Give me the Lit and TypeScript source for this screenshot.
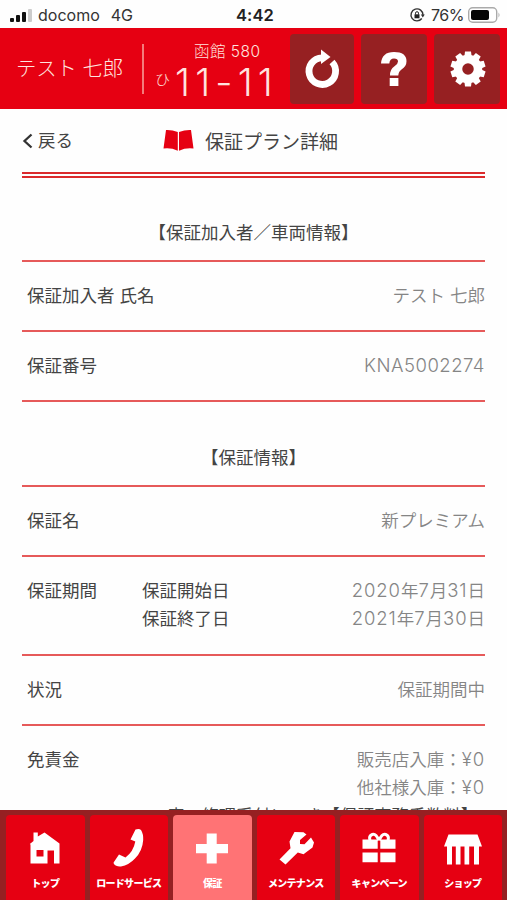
import { LitElement, html, css, svg, TemplateResult } from "lit";
import { customElement } from "lit/decorators.js";
import { classMap } from "lit/directives/class-map.js";

type Cell = string | TemplateResult;
interface Row { label: string; sub?: string[]; values: Cell[]; }
interface Tab { label: string; icon: TemplateResult; active?: boolean; }

const num = (s: string) => html`<span class="num">${s}</span>`;

const owner: Row[] = [
  { label: "保証加入者 氏名", values: ["テスト 七郎"] },
  { label: "保証番号", values: [html`<span class="code">KNA5002274</span>`] },
];

const plan: Row[] = [
  { label: "保証名", values: ["新プレミアム"] },
  {
    label: "保証期間",
    sub: ["保証開始日", "保証終了日"],
    values: [
      html`${num("2020")}年${num("7")}月${num("31")}日`,
      html`${num("2021")}年${num("7")}月${num("30")}日`,
    ],
  },
  { label: "状況", values: ["保証期間中"] },
  {
    label: "免責金",
    values: [
      html`販売店入庫：${num("¥0")}`,
      html`他社様入庫：${num("¥0")}`,
      html`<span class="note">度の修理受付につき【保証事務手数料】</span>`,
    ],
  },
];

const tabs: Tab[] = [
  {
    label: "トップ",
    icon: svg`<path fill-rule="evenodd" d="M4.500 3.500h4.300v4L15.500 3.500 30.500 14.500V34.500H25V21.500h-6.500v13H1.500V15.500L.8 15l3.700-3zM7.500 21v6.500h7V21z"/>`,
  },
  {
    label: "ロードサービス",
    icon: svg`<path d="M22.500.6Q26-1 28 1 30.500 5 30.200 11 29.500 22 22 29.500 16 36 8 37.500 3 38 .8 34.800L.6 33.400 6 25.500 12.500 28.500Q20.500 22.500 22.300 12.500L17.500 10.500z"/>`,
  },
  { label: "保証", active: true, icon: svg`<path d="M10.700 4.500h10V15H32v9.200H20.700v10.400h-10V24.200H0V15h10.700z"/>` },
  {
    label: "メンテナンス",
    icon: svg`<path d="M14.500 3 23.500 3.300 26.500 5.500 20 11 20 15 24.500 15.200 31 8.500 34 13.500 32.500 18.500 23.500 25.300 17.800 23.600 5.500 35.600-.5 30.500 10.500 19.200 9.500 12.500z"/>`,
  },
  {
    label: "キャンペーン",
    icon: svg`<path d="M-.5 10.500h15.200v9.300H-.5zM17.300 10.500h15.200v9.300H17.300zM-.5 23.500h15.200v9.800H-.5zM17.300 23.500h15.200v9.800H17.300z"/><path class="stroke" d="M15.800 11.500Q13 4.300 9.300 5.500 5.500 7 7 11.500M16.200 11.500Q19 4.300 22.700 5.500 26.500 7 25 11.500"/>`,
  },
  {
    label: "ショップ",
    icon: svg`<path d="M1.500 5.500h29L35 17.500H-3zM0 17h5v18.500H0zM8.800 17h4.700v18.500H8.800zM17.500 17h4.700v18.500h-4.700zM27 17h5v18.500h-5z"/>`,
  },
];

@customElement("app-root")
export class AppRoot extends LitElement {
  static styles = css`
    :host {
      display: flex; flex-direction: column; height: 900px; width: 507px; overflow: hidden;
      background: #fefefe; color: #444; box-sizing: border-box;
      font-family: Inter, "Noto Sans CJK JP", sans-serif; font-size: 17.5px; line-height: 28px;
      white-space: nowrap;
    }
    * { box-sizing: border-box; }
    svg { display: block; overflow: visible; }
    .status {
      display: grid; grid-template-columns: 1fr auto 1fr; flex: none; height: 28px; align-items: center;
      padding: 2px 7px 0 10px; color: #333; font-size: 16px; line-height: 26px;
    }
    .carrier { display: flex; align-items: center; }
    .carrier svg { margin-right: 6px; }
    .net { margin-left: 11px; }
    .clock { font-weight: 600; color: #222; font-size: 16.500px; letter-spacing: .1px; }
    .power { display: flex; align-items: center; justify-content: flex-end; gap: 4px; font-size: 16px; letter-spacing: -.5px; }
    .lock { margin-right: 3px; }
    .head { display: flex; flex: none; height: 81px; background: #e60012; color: #ffe3df; align-items: center; padding: 0 5px 0 16px; }
    .user { width: 126px; font-size: 20.300px; font-weight: 300; padding-top: 1px; }
    .rule { width: 2px; height: 50px; background: #f47b7b; }
    .plate { width: 146px; height: 81px; display: flex; flex-direction: column; padding: 14px 0 0 11px; }
    .area { font-size: 15.500px; line-height: 20px; padding-left: 39px; font-weight: 300; letter-spacing: .5px; }
    .plateno { display: flex; align-items: center; height: 36px; margin-top: 2px; }
    .kana { font-size: 15px; width: 20px; font-weight: 300; padding-bottom: 4px; }
    .big { font-size: 38px; font-weight: 300; line-height: 36px; letter-spacing: 5.200px; }
    .btns { display: flex; gap: 7px; }
    .btn { width: 66px; height: 70px; border-radius: 4px; background: #962022; display: grid; place-items: center; }
    .btn svg { fill: #fff; }
    .btn:first-child { width: 64px; }
    .main { flex: 1; min-height: 0; overflow: hidden; padding: 0 22px; }
    .title { display: flex; align-items: center; height: 69px; padding-top: 1px; border-bottom: 6px double #db2a2c; }
    .back { display: flex; align-items: center; gap: 5px; width: 141px; }
    .name { margin-left: 11px; font-size: 19px; padding-top: 3px; }
    .section { text-align: center; height: 85px; padding-top: 42px; border-bottom: 2px solid #e65a5a; }
    .section.first { height: 84px; padding-top: 41px; }
    .row { display: flex; padding: 20px 0 20px 5px; border-bottom: 2px solid #e65a5a; }
    .row.tall { padding-bottom: 21px; }
    .label { width: 115px; }
    .row > div > div { height: 28px; }
    .vals { margin-left: auto; text-align: right; color: #858585; font-weight: 350; }
    .num, .code { font-size: 18.500px; font-weight: 300; line-height: 1; letter-spacing: .9px; }
    .code { letter-spacing: .5px; }
    .note { display: block; padding: 0 7px 0 0; color: #444; font-size: 17.300px; }
    .tabs { display: flex; gap: 5px; flex: none; height: 90px; background: #962022; padding: 5px 5px 0 6px; }
    .tab { flex: 1; background: #e60012; border-radius: 4px 4px 0 0; color: #fff; display: flex; flex-direction: column; align-items: center; padding-top: 14px; }
    .tab.active { background: #ff7375; }
    .tab svg { fill: #fff; }
    .stroke { fill: none; stroke: #fff; stroke-width: 3; }
    .cap { font-size: 10px; line-height: 14px; font-weight: 900; margin-top: 9px; letter-spacing: -.7px; }
  `;

  private row(r: Row) {
    return html`<div class=${classMap({ row: true, tall: !!r.sub })}>
      <div class="label">${r.label}</div>
      ${r.sub ? html`<div>${r.sub.map((s) => html`<div>${s}</div>`)}</div>` : null}
      <div class="vals">${r.values.map((v) => html`<div>${v}</div>`)}</div>
    </div>`;
  }

  render() {
    return html`
      <div class="status">
        <div class="carrier">
          <svg width="22" height="13"><g fill="#111"><rect y="9" width="4" height="4" rx="1"/><rect x="6" y="6" width="4" height="7" rx="1"/><rect x="12" y="3" width="4" height="10" rx="1"/></g><rect x="18" width="4" height="13" rx="1" fill="#ccc"/></svg>
          <span>docomo</span><span class="net">4G</span>
        </div>
        <div class="clock">4:42</div>
        <div class="power">
          <svg class="lock" width="14" height="14" viewBox="0 0 14 14"><path d="M11.800 10.500A6 6 0 1 1 13 7" fill="none" stroke="#333" stroke-width="1.400"/><path d="M10.800 6.500h4l-2 3z" fill="#333"/><rect x="4.500" y="6.300" width="5" height="4" fill="#222"/><path d="M5.500 6.500V5.200a1.500 1.500 0 0 1 3 0v1.300" fill="none" stroke="#222"/></svg>
          <span>76%</span>
          <svg width="32" height="16"><rect x=".7" y=".7" width="28" height="14.600" rx="4" fill="#fff" stroke="#aaa" stroke-width="1.400"/><rect x="3" y="3" width="18" height="10" rx="2" fill="#050505"/><path d="M30.500 5.500q2 2.500 0 5z" fill="#aaa"/></svg>
        </div>
      </div>
      <div class="head">
        <div class="user">テスト 七郎</div>
        <div class="rule"></div>
        <div class="plate">
          <div class="area">函館 580</div>
          <div class="plateno"><span class="kana">ひ</span><span class="big">11-11</span></div>
        </div>
        <div class="btns">
          <div class="btn"><svg width="34" height="38" viewBox="0 0 34 38"><path d="M16-.5 25.500 7 16 14z"/><path d="M17 7.800A13.300 13.300 0 1 0 27 12" fill="none" stroke="#fff" stroke-width="6.800"/></svg></div>
          <div class="btn"><svg width="26" height="34" viewBox="0 0 26 34"><path d="M0 11.500Q.8 0 13 0 25.500 0 25.500 9.300 25.500 14.500 20.500 17.500 17.500 19.500 17.300 23.500H9Q8.800 17.500 13.500 14.300 17 12 17 9.500 17 6.500 13 6.500 8.800 6.500 8.300 11.500zM8.700 26h8.700v8H8.700z"/></svg></div>
          <div class="btn"><svg width="36" height="36" viewBox="-19 -18 36 36"><g>${Array.from({ length: 10 }, (_, i) => svg`<path transform="rotate(${i * 36})" d="M-3.800-11-3-17.500H3L3.800-11z"/>`)}</g><circle r="10" fill="none" stroke="#fff" stroke-width="8.500"/></svg></div>
        </div>
      </div>
      <div class="main">
        <div class="title">
          <div class="back"><svg width="11" height="16"><path d="M9.500 1.500 2.500 8l7 6.500" fill="none" stroke="#333" stroke-width="2.300"/></svg><span>戻る</span></div>
          <svg width="31" height="21" viewBox="0 1 31 21" fill="#e60012"><path d="M3 0Q9-.3 14.800 2V20.700Q8 17.500 .5 18.500zM16 2Q22-.3 28 0L30.500 18.500Q23 17.500 16 20.700z"/></svg>
          <div class="name">保証プラン詳細</div>
        </div>
        <div class="section first">【保証加入者／車両情報】</div>
        ${owner.map((r) => this.row(r))}
        <div class="section">【保証情報】</div>
        ${plan.map((r) => this.row(r))}
      </div>
      <div class="tabs">
        ${tabs.map((t) => html`<div class=${classMap({ tab: true, active: !!t.active })}>
          <svg width="32" height="38" viewBox="0 0 32 38">${t.icon}</svg>
          <div class="cap">${t.label}</div>
        </div>`)}
      </div>`;
  }
}
